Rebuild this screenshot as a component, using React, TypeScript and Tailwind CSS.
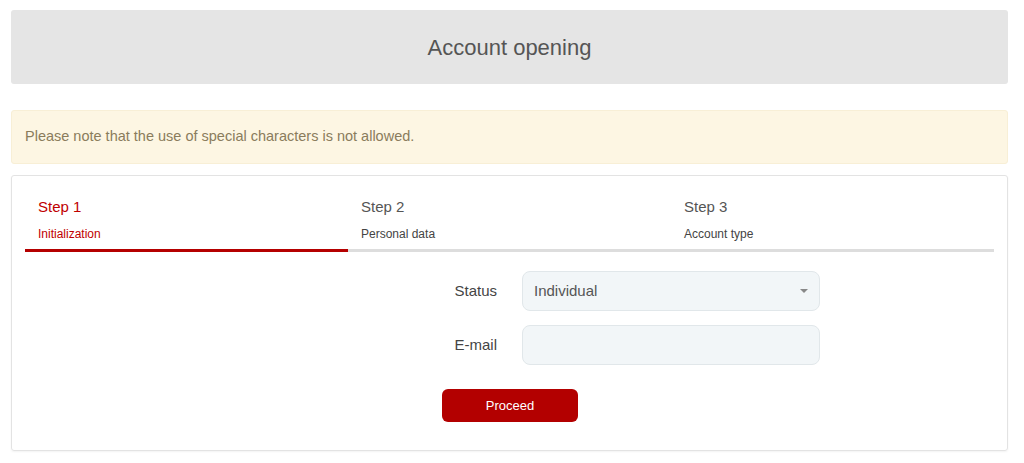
export default function App() {
  const steps = [
    { title: "Step 1", sub: "Initialization", active: true },
    { title: "Step 2", sub: "Personal data", active: false },
    { title: "Step 3", sub: "Account type", active: false },
  ];

  return (
    <div className="min-h-screen bg-white px-[11px] pt-[10px] font-['Liberation_Sans',Arial,sans-serif] w-[1019px]">
      <div className="h-[74px] rounded-[3px] bg-[#e5e5e5] flex items-center justify-center">
        <h1 className="text-[22px] text-[#555]">Account opening</h1>
      </div>

      <div className="mt-[26px] h-[54px] rounded-[3px] bg-[#fdf6e3] border border-[#f8efd6] flex items-center px-[13px]">
        <p className="text-[14.5px] text-[#8a7c5c]">Please note that the use of special characters is not allowed.</p>
      </div>

      <div className="mt-[11px] border border-[#e3e3e3] rounded-[3px] px-[13px] pt-[21px] pb-[28px] shadow-[0_1px_2px_rgba(0,0,0,0.05)]">
        <div className="grid grid-cols-3">
          {steps.map((s) => (
            <div key={s.title}>
              <div className="pl-[13px]">
                <div className={`text-[15px] leading-5 ${s.active ? "text-[#c00000]" : "text-[#555]"}`}>{s.title}</div>
                <div className={`mt-[9px] text-[12px] leading-4 ${s.active ? "text-[#c00000]" : "text-[#444]"}`}>{s.sub}</div>
              </div>
              <div className={`mt-[7px] h-[3px] ${s.active ? "bg-[#b50000]" : "bg-[#ddd]"}`} />
            </div>
          ))}
        </div>

        <div className="mt-[19px] flex items-center">
          <label className="w-[472px] text-right text-[15px] text-[#444]">Status</label>
          <div className="ml-[25px] w-[298px] h-[40px] rounded-[8px] bg-[#f2f6f8] border border-[#e1e7ea] flex items-center justify-between pl-[11px] pr-[11px]">
            <span className="text-[15px] text-[#555]">Individual</span>
            <span className="w-0 h-0 border-l-[4px] border-r-[4px] border-t-[4px] border-l-transparent border-r-transparent border-t-[#888]" />
          </div>
        </div>

        <div className="mt-[14px] flex items-center">
          <label className="w-[472px] text-right text-[15px] text-[#444]">E-mail</label>
          <input className="ml-[25px] w-[298px] h-[40px] rounded-[8px] bg-[#f2f6f8] border border-[#e1e7ea] px-[11px] outline-none" />
        </div>

        <button className="mt-[24px] ml-[417px] w-[136px] h-[33px] rounded-[6px] bg-[#b30000] text-white text-[13px]">
          Proceed
        </button>
      </div>
    </div>
  );
}
